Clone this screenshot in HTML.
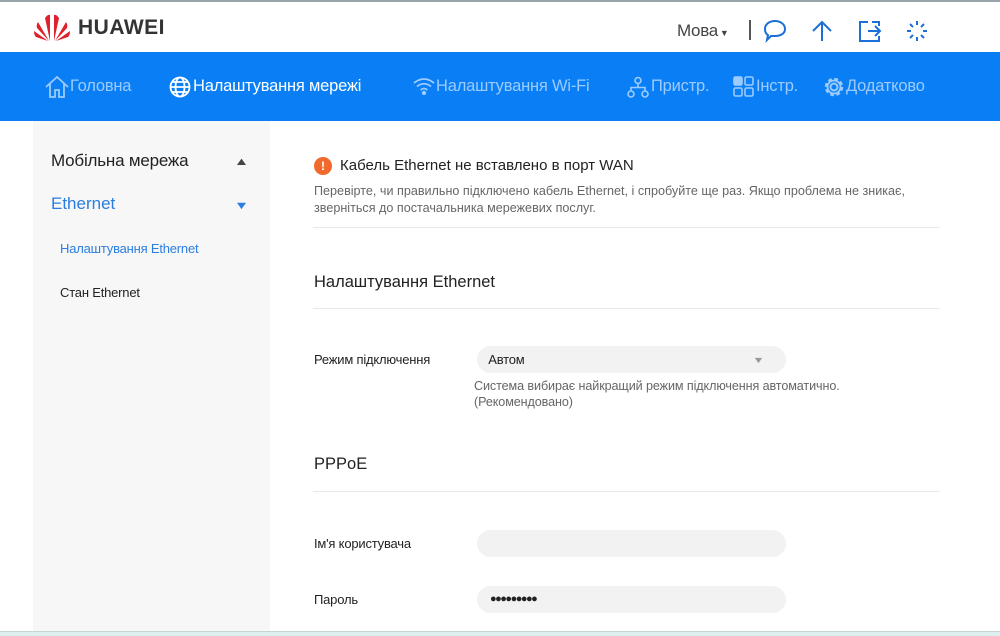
<!DOCTYPE html>
<html><head><meta charset="utf-8"><style>
*{margin:0;padding:0;box-sizing:border-box}
body{width:1000px;height:636px;overflow:hidden;background:#fff;font-family:"Liberation Sans",sans-serif;position:relative;color:#222}
.abs{position:absolute;white-space:nowrap}
.top{position:absolute;left:0;top:0;width:1000px;height:2px;background:#9aa4ab}
.nav{position:absolute;left:0;top:52px;width:1000px;height:69px;background:#0a7ff5}
.nav .abs{font-size:16.5px;color:#9ccbff;top:25px;letter-spacing:-0.2px}
.side{position:absolute;left:33px;top:121px;width:237px;height:515px;background:#f7f7f7}
.hr{position:absolute;height:1px;background:#e8e8e8;left:313px;width:627px}
.inp{position:absolute;left:477px;width:309px;height:27px;border-radius:14px;background:#f2f2f2}
.lbl{font-size:13px;color:#222;letter-spacing:-0.2px}
.bottom{position:absolute;left:0;top:631px;width:1000px;height:5px;background:#dceeed;border-top:1px solid #c8d4d4}
</style></head><body>
<div class="top"></div>
<svg class="abs" style="left:33px;top:12px" width="38" height="30" viewBox="0 0 38 30">
<g fill="#e0202a">
<path d="M17 29 L12 6 Q15 2 17 3 Z"/><path d="M21 29 L26 6 Q23 2 21 3 Z"/>
<path d="M16 29 L5 10 Q3 13 4 16 Z"/><path d="M22 29 L33 10 Q35 13 34 16 Z"/>
<path d="M15 29 L1 19 Q1 23 3 25 Z"/><path d="M23 29 L37 19 Q37 23 35 25 Z"/>
</g></svg>
<div class="abs" style="left:78px;top:16px;font-size:21px;font-weight:bold;color:#333;letter-spacing:0.5px">HUAWEI</div>
<div class="abs" style="left:677px;top:21px;font-size:17px;color:#444;letter-spacing:-0.3px">Мова<span style="font-size:9px;margin-left:2px">▼</span></div>
<div class="abs" style="left:749px;top:20px;width:2px;height:20px;background:#555"></div>
<svg class="abs" style="left:762px;top:18px" width="180" height="26" viewBox="0 0 180 26" fill="none" stroke="#1b6fd6" stroke-width="2">
<path d="M3 11 C3 5 9 3 13 3 C18 3 23 6 23 11 C23 16 18 18 13 18 L9 18 L5 22 L6 17 C4 16 3 14 3 11Z"/>
<path d="M60 4 L60 23 M51 13 L60 4 L69 13"/>
<path d="M106 4 L98 4 L98 23 L117 23 L117 18 M106 13 L118 13 M113 8 L118 13 L113 18 M117 8 L117 4 L110 4"/>
<g stroke-width="2"><path d="M155 3v4M155 19v4M145 13h4M161 13h4M148 6l3 3M159 17l3 3M162 6l-3 3M151 17l-3 3"/></g>
</svg>
<div class="nav">
<svg class="abs" style="left:45px;top:24px" width="24" height="22" viewBox="0 0 24 22" fill="none" stroke="#9ccbff" stroke-width="1.8"><path d="M1 11 L12 1 L23 11 M5 8 V21 H10 V14 H14 V21 H19 V8"/></svg>
<div class="abs" style="left:70px">Головна</div>
<svg class="abs" style="left:169px;top:24px" width="22" height="22" viewBox="0 0 22 22" fill="none" stroke="#fff" stroke-width="1.8"><circle cx="11" cy="11" r="9.5"/><ellipse cx="11" cy="11" rx="4.5" ry="9.5"/><path d="M1.5 11h19M3 6h16M3 16h16"/></svg>
<div class="abs" style="left:193px;color:#fff">Налаштування мережі</div>
<svg class="abs" style="left:413px;top:25px" width="22" height="18" viewBox="0 0 22 18" fill="none" stroke="#9ccbff" stroke-width="1.8"><path d="M1 6 Q11 -2 21 6 M4 9.5 Q11 4 18 9.5 M7.5 13 Q11 10 14.5 13"/><circle cx="11" cy="16" r="1.3" fill="#9ccbff"/></svg>
<div class="abs" style="left:436px">Налаштування Wi-Fi</div>
<svg class="abs" style="left:627px;top:24px" width="22" height="22" viewBox="0 0 22 22" fill="none" stroke="#9ccbff" stroke-width="1.6"><circle cx="11" cy="4.5" r="3"/><circle cx="4" cy="18" r="3"/><circle cx="18" cy="18" r="3"/><path d="M11 7.5v4M4 15v-3.5h14V15"/></svg>
<div class="abs" style="left:651px">Пристр.</div>
<svg class="abs" style="left:733px;top:24px" width="21" height="21" viewBox="0 0 21 21" fill="none" stroke="#9ccbff" stroke-width="1.6"><rect x="1" y="1" width="8" height="8" rx="1.5" fill="#9ccbff"/><rect x="12" y="1" width="8" height="8" rx="1.5"/><rect x="1" y="12" width="8" height="8" rx="1.5"/><rect x="12" y="12" width="8" height="8" rx="1.5"/></svg>
<div class="abs" style="left:756px">Інстр.</div>
<svg class="abs" style="left:823px;top:24px" width="22" height="22" viewBox="0 0 22 22" fill="none" stroke="#9ccbff"><circle cx="11" cy="11" r="3.5" stroke-width="2"/><circle cx="11" cy="11" r="7.5" stroke-width="3.5" stroke-dasharray="3.5 2.4"/><circle cx="11" cy="11" r="6.5" stroke-width="1.8"/></svg>
<div class="abs" style="left:846px">Додатково</div>
</div>
<div class="side">
<div class="abs" style="left:18px;top:30px;font-size:17px;color:#222;letter-spacing:-0.2px">Мобільна мережа</div>
<div class="abs" style="left:203px;top:35px;font-size:11px;color:#444;transform:scaleX(1.4)">▲</div>
<div class="abs" style="left:18px;top:73px;font-size:17px;color:#2a7ee0">Ethernet</div>
<div class="abs" style="left:203px;top:79px;font-size:11px;color:#2a7ee0;transform:scaleX(1.4)">▼</div>
<div class="abs" style="left:27px;top:120px;font-size:13px;color:#2a7ee0;letter-spacing:-0.2px">Налаштування Ethernet</div>
<div class="abs" style="left:27px;top:164px;font-size:13px;color:#222;letter-spacing:-0.2px">Стан Ethernet</div>
</div>
<div class="abs" style="left:314px;top:157px;width:18px;height:18px;border-radius:50%;background:#f06a2e;color:#fff;font-size:12px;font-weight:bold;text-align:center;line-height:18px">!</div>
<div class="abs" style="left:340px;top:157px;font-size:15px;color:#222">Кабель Ethernet не вставлено в порт WAN</div>
<div class="abs" style="left:314px;top:183px;font-size:12.6px;color:#666;line-height:17px">Перевірте, чи правильно підключено кабель Ethernet, і спробуйте ще раз. Якщо проблема не зникає,<br>зверніться до постачальника мережевих послуг.</div>
<div class="hr" style="top:227px"></div>
<div class="abs" style="left:314px;top:273px;font-size:16.5px;color:#222">Налаштування Ethernet</div>
<div class="hr" style="top:308px"></div>
<div class="abs lbl" style="left:314px;top:352px">Режим підключення</div>
<div class="inp" style="top:346px"></div>
<div class="abs lbl" style="left:478px;top:352px;left:478px;padding-left:0"><span style="position:relative;left:0">&nbsp;&nbsp;&nbsp;Автом</span></div>
<div class="abs" style="left:754px;top:355px;font-size:9px;color:#999;transform:scaleX(1.4)">▼</div>
<div class="abs" style="left:474px;top:378px;font-size:12.6px;color:#666;line-height:16px;letter-spacing:-0.1px">Система вибирає найкращий режим підключення автоматично.<br>(Рекомендовано)</div>
<div class="abs" style="left:314px;top:455px;font-size:16.5px;color:#222">PPPoE</div>
<div class="hr" style="top:491px"></div>
<div class="abs lbl" style="left:314px;top:536px">Ім'я користувача</div>
<div class="inp" style="top:530px"></div>
<div class="abs lbl" style="left:314px;top:592px">Пароль</div>
<div class="inp" style="top:586px"></div>
<div class="abs" style="left:490px;top:592px;font-size:11px;color:#222;letter-spacing:-1.5px;line-height:14px">●●●●●●●●●</div>
<div class="bottom"></div>
</body></html>
